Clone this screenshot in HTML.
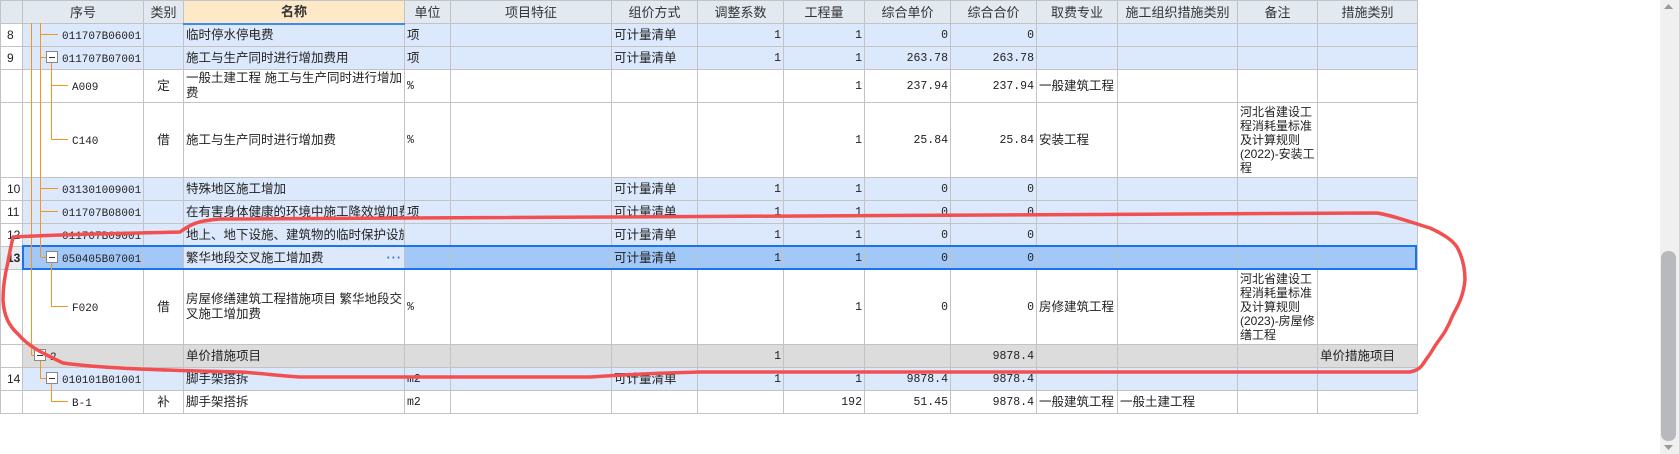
<!DOCTYPE html>
<html><head><meta charset="utf-8"><style>
body{margin:0;width:1679px;height:454px;background:#fff;overflow:hidden;position:relative;font-family:"Liberation Sans","Noto Sans CJK SC",sans-serif;}
table{border-collapse:collapse;table-layout:fixed;position:absolute;left:0;top:0;width:1418px;}
td{border:1px solid #c3c3c3;padding:0 2px;font-size:12.5px;color:#222;overflow:hidden;white-space:nowrap;vertical-align:middle;line-height:15px;box-sizing:border-box;}
tr.h td{background:#e3e9f1;text-align:center;font-size:13px;color:#333;}
tr.h td.nm{background:#fde8c8;font-weight:bold;border-bottom:2px solid #3b8ef0;}
tr.b td{background:#dce8fb;}
tr.g td{background:#dcdcdc;}
tr.s td{background:#a2c8f8;}
td.n{font-family:"Liberation Mono",monospace;font-size:11.5px;text-align:right;}
td.c{text-align:center;}
td.rn{background:#fff!important;padding-left:6px;font-size:12px;}
td.w{white-space:normal;}
.m{font-family:"Liberation Mono",monospace;font-size:11.5px;}
</style></head><body>
<table>
<colgroup><col style="width:22px"><col style="width:121px"><col style="width:40px"><col style="width:221px"><col style="width:46px"><col style="width:161px"><col style="width:86px"><col style="width:86px"><col style="width:81px"><col style="width:86px"><col style="width:86px"><col style="width:81px"><col style="width:120px"><col style="width:80px"><col style="width:100px"></colgroup>
<tr class="h" style="height:23px"><td></td><td>序号</td><td>类别</td><td class="nm">名称</td><td>单位</td><td>项目特征</td><td>组价方式</td><td>调整系数</td><td>工程量</td><td>综合单价</td><td>综合合价</td><td>取费专业</td><td>施工组织措施类别</td><td>备注</td><td>措施类别</td></tr>
<tr class="b" style="height:23px"><td class="rn">8</td><td></td><td></td><td>临时停水停电费</td><td>项</td><td></td><td>可计量清单</td><td class="n">1</td><td class="n">1</td><td class="n">0</td><td class="n">0</td><td></td><td></td><td></td><td></td></tr>
<tr class="b" style="height:23px"><td class="rn">9</td><td></td><td></td><td>施工与生产同时进行增加费用</td><td>项</td><td></td><td>可计量清单</td><td class="n">1</td><td class="n">1</td><td class="n">263.78</td><td class="n">263.78</td><td></td><td></td><td></td><td></td></tr>
<tr style="height:33px"><td class="rn"></td><td></td><td class="c">定</td><td class="w">一般土建工程 施工与生产同时进行增加费</td><td class="m">%</td><td></td><td></td><td></td><td class="n">1</td><td class="n">237.94</td><td class="n">237.94</td><td>一般建筑工程</td><td></td><td></td><td></td></tr>
<tr style="height:75px"><td class="rn"></td><td></td><td class="c">借</td><td>施工与生产同时进行增加费</td><td class="m">%</td><td></td><td></td><td></td><td class="n">1</td><td class="n">25.84</td><td class="n">25.84</td><td>安装工程</td><td></td><td class="w" style="font-size:12px;line-height:14px">河北省建设工程消耗量标准及计算规则(2022)-安装工程</td><td></td></tr>
<tr class="b" style="height:23px"><td class="rn">10</td><td></td><td></td><td>特殊地区施工增加</td><td></td><td></td><td>可计量清单</td><td class="n">1</td><td class="n">1</td><td class="n">0</td><td class="n">0</td><td></td><td></td><td></td><td></td></tr>
<tr class="b" style="height:23px"><td class="rn">11</td><td></td><td></td><td>在有害身体健康的环境中施工降效增加费</td><td>项</td><td></td><td>可计量清单</td><td class="n">1</td><td class="n">1</td><td class="n">0</td><td class="n">0</td><td></td><td></td><td></td><td></td></tr>
<tr class="b" style="height:23px"><td class="rn">12</td><td></td><td></td><td>地上、地下设施、建筑物的临时保护设施</td><td></td><td></td><td>可计量清单</td><td class="n">1</td><td class="n">1</td><td class="n">0</td><td class="n">0</td><td></td><td></td><td></td><td></td></tr>
<tr class="s" style="height:23px"><td class="rn" style="font-weight:bold;background:#e8edf4!important">13</td><td></td><td></td><td style="background:#dde9fb">繁华地段交叉施工增加费<span style="float:right;color:#2a7ad8;font-weight:bold;letter-spacing:1px">···</span></td><td></td><td></td><td>可计量清单</td><td class="n">1</td><td class="n">1</td><td class="n">0</td><td class="n">0</td><td></td><td></td><td></td><td></td></tr>
<tr style="height:75px"><td class="rn"></td><td></td><td class="c">借</td><td class="w">房屋修缮建筑工程措施项目 繁华地段交叉施工增加费</td><td class="m">%</td><td></td><td></td><td></td><td class="n">1</td><td class="n">0</td><td class="n">0</td><td>房修建筑工程</td><td></td><td class="w" style="font-size:12px;line-height:14px">河北省建设工程消耗量标准及计算规则(2023)-房屋修缮工程</td><td></td></tr>
<tr class="g" style="height:23px"><td class="rn"></td><td></td><td></td><td>单价措施项目</td><td></td><td></td><td></td><td class="n">1</td><td></td><td></td><td class="n">9878.4</td><td></td><td></td><td></td><td>单价措施项目</td></tr>
<tr class="b" style="height:23px"><td class="rn">14</td><td></td><td></td><td>脚手架搭拆</td><td class="m">m2</td><td></td><td>可计量清单</td><td class="n">1</td><td class="n">1</td><td class="n">9878.4</td><td class="n">9878.4</td><td></td><td></td><td></td><td></td></tr>
<tr style="height:23px"><td class="rn"></td><td></td><td class="c">补</td><td>脚手架搭拆</td><td class="m">m2</td><td></td><td></td><td></td><td class="n">192</td><td class="n">51.45</td><td class="n">9878.4</td><td>一般建筑工程</td><td>一般土建工程</td><td></td><td></td></tr>
</table>
<div style="position:absolute;left:22px;top:245px;width:1395px;height:25px;border:2px solid #1a73e8;box-sizing:border-box;"></div>
<svg width="1679" height="454" style="position:absolute;left:0;top:0" font-family="Liberation Mono,monospace" font-size="11" fill="#222">
<g stroke="#f7941d" stroke-width="1" fill="none">
<path d="M31.5 23V355M40.5 23V257M40.5 34.5H58M40.5 57.5H46M51.5 63V139.5M51.5 85.5H68M51.5 139.5H68M40.5 188.5H58M40.5 211.5H58M40.5 234.5H58M40.5 257.5H46M51.5 263V306.5H68M31.5 355.5H34M40.5 361V378.5H46M51.5 384V401.5H68"/>
</g>
<g fill="#fff" stroke="#888"><rect x="46.5" y="51.5" width="11" height="11"/><rect x="46.5" y="251.5" width="11" height="11"/><rect x="34.5" y="349.5" width="11" height="11"/><rect x="46.5" y="372.5" width="11" height="11"/></g>
<g stroke="#333"><path d="M49 57.5H55M49 257.5H55M37 355.5H43M49 378.5H55"/></g>
<text x="62" y="39">011707B06001</text>
<text x="62" y="62">011707B07001</text>
<text x="72" y="90">A009</text>
<text x="72" y="144">C140</text>
<text x="62" y="193">031301009001</text>
<text x="62" y="216">011707B08001</text>
<text x="62" y="239">011707B09001</text>
<text x="62" y="262">050405B07001</text>
<text x="72" y="311">F020</text>
<text x="50" y="360">2</text>
<text x="62" y="383">010101B01001</text>
<text x="72" y="406">B-1</text>
<path d="M13 237C60 234 150 233 180 232C190 225 195 221 220 219L1377 213C1395 216 1410 222 1430 228C1445 235 1452 240 1457 247C1463 258 1465 268 1465 280C1463 300 1455 310 1452 317C1447 330 1442 336 1437 343C1432 350 1430 355 1427 358C1422 366 1420 370 1410 372L700 372C660 373 620 375 590 377L300 377C280 376 260 373 240 372C150 370 100 368 63 363C40 352 28 346 18 334C8 325 4 315 3 300C3 285 6 270 8 262C10 250 12 242 13 237Z" fill="none" stroke="#f25050" stroke-width="3.5" stroke-linejoin="round"/>
<rect x="1660" y="0" width="19" height="454" fill="#f0f0f0"/>
<rect x="1661" y="251" width="15" height="190" rx="7" fill="#b7b9bd"/>
<path d="M1664 9L1668.5 4L1673 9Z" fill="#9a9a9a"/><path d="M1664 445L1668.5 450L1673 445Z" fill="#9a9a9a"/>
</svg>
</body></html>
